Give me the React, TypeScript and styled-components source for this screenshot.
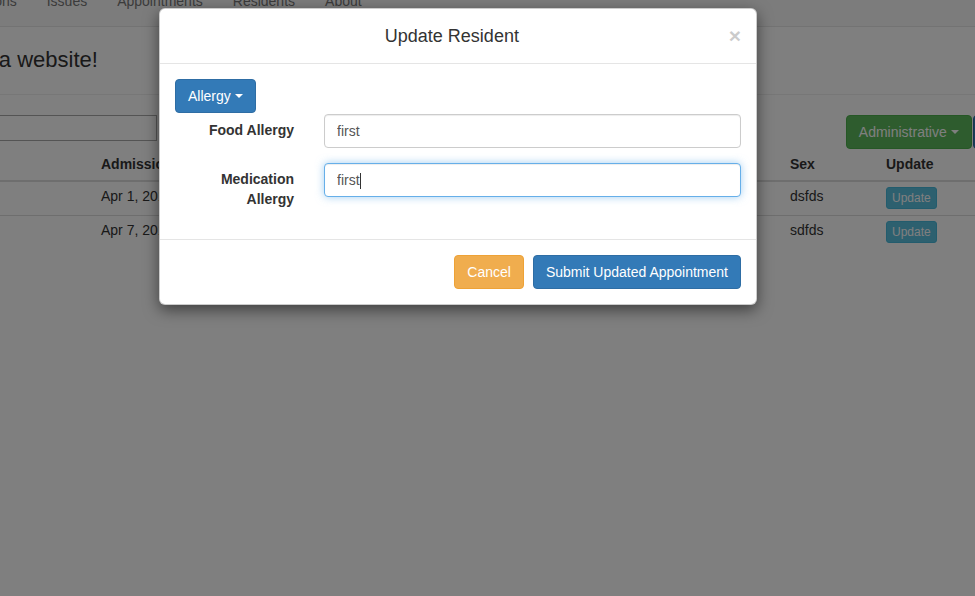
import React from 'react';
import styled, { createGlobalStyle, css } from 'styled-components';

const GlobalStyle = createGlobalStyle`
  html, body {
    margin: 0;
    padding: 0;
  }
  body {
    font-family: 'Liberation Sans', Arial, Helvetica, sans-serif;
    font-size: 14px;
    line-height: 1.42857;
    color: #333;
    background: #fff;
  }
  * {
    box-sizing: border-box;
  }
`;

const Viewport = styled.div`
  position: relative;
  width: 975px;
  height: 596px;
  overflow: hidden;
  background: #fff;
`;

// page is scrolled a bit right and down under the modal
const Page = styled.div`
  width: 1250px;
  margin: -24px 0 0 -140px;
`;

const Navbar = styled.nav`
  display: flex;
  height: 51px;
  padding-left: 67px;
  background: #f8f8f8;
  border-bottom: 1px solid #e7e7e7;
`;

const NavLink = styled.a`
  padding: 15px;
  line-height: 20px;
  color: #777;
  text-decoration: none;
`;

const PageHeader = styled.div`
  display: flex;
  align-items: center;
  height: 68px;
  padding: 0 15px;
  border-bottom: 1px solid #eee;
`;

const Heading = styled.h2`
  margin: 0 0 0 2px;
  font-size: 22px;
  font-weight: 500;
  line-height: 1.1;
  color: #333;
`;

const Container = styled.div`
  width: 1214px;
  padding: 0 15px;
`;

const Toolbar = styled.div`
  display: flex;
  align-items: flex-start;
  margin-top: 20px;
`;

const SearchInput = styled.input`
  width: 282px;
  height: 26px;
  border: 1px solid #a9a9a9;
  font: inherit;
`;

const ButtonGroup = styled.div`
  display: flex;
  gap: 1px;
  margin-left: auto;
`;

const Dropdown = styled.div`
  margin-bottom: 1px;
`;

const variants = {
  primary: css`
    background: #337ab7;
    border-color: #2e6da4;
  `,
  warning: css`
    background: #f0ad4e;
    border-color: #eea236;
  `,
  success: css`
    background: #5cb85c;
    border-color: #4cae4c;
  `,
  info: css`
    background: #5bc0de;
    border-color: #46b8da;
  `,
};

const Button = styled.button<{ $variant: keyof typeof variants; $xs?: boolean }>`
  display: inline-flex;
  align-items: center;
  padding: ${(p) => (p.$xs ? '1px 5px' : '6px 12px')};
  font-family: inherit;
  font-size: ${(p) => (p.$xs ? '12px' : '14px')};
  line-height: ${(p) => (p.$xs ? '18px' : '20px')};
  color: #fff;
  white-space: nowrap;
  border: 1px solid transparent;
  border-radius: ${(p) => (p.$xs ? '3px' : '4px')};
  cursor: pointer;
  ${(p) => variants[p.$variant]}
`;

const Caret = styled.span`
  display: inline-block;
  width: 0;
  height: 0;
  margin-left: 4px;
  border-top: 4px solid;
  border-right: 4px solid transparent;
  border-left: 4px solid transparent;
`;

const Table = styled.table`
  width: 100%;
  table-layout: fixed;
  border-collapse: collapse;
`;

const Col = styled.col<{ $w: number }>`
  width: ${(p) => p.$w}px;
`;

const Th = styled.th`
  padding: 6px 5px 5px;
  text-align: left;
  vertical-align: bottom;
  font-weight: 700;
  white-space: nowrap;
  overflow: hidden;
  border-bottom: 2px solid #ddd;
`;

const Td = styled.td`
  padding: 5px 5px 6px;
  vertical-align: top;
  white-space: nowrap;
  overflow: hidden;
  border-top: 1px solid #ddd;
`;

const Backdrop = styled.div`
  position: absolute;
  inset: 0;
  background: rgba(0, 0, 0, 0.5);
`;

const Dialog = styled.div`
  width: 598px;
  margin: 8px 0 0 159px;
  background: #fff;
  border: 1px solid rgba(0, 0, 0, 0.2);
  border-radius: 6px;
  box-shadow: 0 5px 15px rgba(0, 0, 0, 0.5);
`;

const ModalHeader = styled.div`
  display: flex;
  align-items: center;
  height: 55px;
  padding: 0 15px;
  border-bottom: 1px solid #e5e5e5;
`;

const ModalTitle = styled.h4`
  flex: 1;
  margin: 0;
  font-size: 18px;
  font-weight: 500;
  line-height: 24px;
  text-align: center;
`;

const Close = styled.button`
  padding: 0;
  margin-top: -2px;
  background: none;
  border: 0;
  font-family: inherit;
  font-size: 21px;
  font-weight: 700;
  line-height: 1;
  color: #000;
  opacity: 0.2;
  text-shadow: 0 1px 0 #fff;
`;

const ModalBody = styled.div`
  padding: 15px 15px 14px;
`;

const FormGroup = styled.div`
  display: flex;
  margin: 0 -15px 15px;
`;

const Label = styled.label`
  width: 25%;
  padding: 7px 15px 0;
  text-align: right;
  font-weight: 700;
`;

const Field = styled.div`
  position: relative;
  width: 75%;
  padding: 0 15px;
`;

const TextInput = styled.input<{ $focus?: boolean }>`
  display: block;
  width: 100%;
  height: 34px;
  padding: 6px 12px;
  font-family: inherit;
  font-size: 14px;
  line-height: 20px;
  color: #555;
  background: #fff;
  border: 1px solid #ccc;
  border-radius: 4px;
  outline: none;
  box-shadow: inset 0 1px 1px rgba(0, 0, 0, 0.075);
  ${(p) =>
    p.$focus &&
    css`
      border-color: #66afe9;
      box-shadow: inset 0 1px 1px rgba(0, 0, 0, 0.075), 0 0 8px rgba(102, 175, 233, 0.6);
    `}
`;

const TextCaret = styled.span`
  position: absolute;
  left: 51px;
  top: 10px;
  width: 1px;
  height: 16px;
  background: #333;
`;

const ModalFooter = styled.div`
  display: flex;
  justify-content: flex-end;
  gap: 9px;
  padding: 15px;
  border-top: 1px solid #e5e5e5;
`;

const residents = [
  { name: 'first', admitted: 'Apr 1, 2017', room: '101', doctor: 'dsfsd', age: '34', sex: 'dsfds' },
  { name: 'second', admitted: 'Apr 7, 2017', room: '102', doctor: 'sdfsd', age: '45', sex: 'sdfds' },
];

const App = () => (
  <Viewport>
    <GlobalStyle />
    <Page>
      <Navbar>
        <NavLink>Medications</NavLink>
        <NavLink>Issues</NavLink>
        <NavLink>Appointments</NavLink>
        <NavLink>Residents</NavLink>
        <NavLink>About</NavLink>
      </Navbar>
      <PageHeader>
        <Heading>Welcome to a website!</Heading>
      </PageHeader>
      <Container>
        <Toolbar>
          <SearchInput />
          <ButtonGroup>
            <Button $variant="success">
              Administrative
              <Caret />
            </Button>
            <Button $variant="primary">
              Medical
              <Caret />
            </Button>
          </ButtonGroup>
        </Toolbar>
        <Table>
          <colgroup>
            <Col $w={221} />
            <Col $w={160} />
            <Col $w={150} />
            <Col $w={200} />
            <Col $w={179} />
            <Col $w={96} />
            <Col $w={178} />
          </colgroup>
          <thead>
            <tr>
              <Th>Name</Th>
              <Th>Admission Date</Th>
              <Th>Room</Th>
              <Th>Doctor</Th>
              <Th>Age</Th>
              <Th>Sex</Th>
              <Th>Update</Th>
            </tr>
          </thead>
          <tbody>
            {residents.map((r) => (
              <tr key={r.name}>
                <Td>{r.name}</Td>
                <Td>{r.admitted}</Td>
                <Td>{r.room}</Td>
                <Td>{r.doctor}</Td>
                <Td>{r.age}</Td>
                <Td>{r.sex}</Td>
                <Td>
                  <Button $variant="info" $xs>
                    Update
                  </Button>
                </Td>
              </tr>
            ))}
          </tbody>
        </Table>
      </Container>
    </Page>

    <Backdrop>
      <Dialog>
        <ModalHeader>
          <ModalTitle>Update Resident</ModalTitle>
          <Close>×</Close>
        </ModalHeader>
        <ModalBody>
          <Dropdown>
            <Button $variant="primary">
              Allergy
              <Caret />
            </Button>
          </Dropdown>
          <FormGroup>
            <Label>Food Allergy</Label>
            <Field>
              <TextInput defaultValue="first" />
            </Field>
          </FormGroup>
          <FormGroup>
            <Label>
              Medication
              <br />
              Allergy
            </Label>
            <Field>
              <TextInput $focus defaultValue="first" />
              <TextCaret />
            </Field>
          </FormGroup>
        </ModalBody>
        <ModalFooter>
          <Button $variant="warning">Cancel</Button>
          <Button $variant="primary">Submit Updated Appointment</Button>
        </ModalFooter>
      </Dialog>
    </Backdrop>
  </Viewport>
);

export default App;
